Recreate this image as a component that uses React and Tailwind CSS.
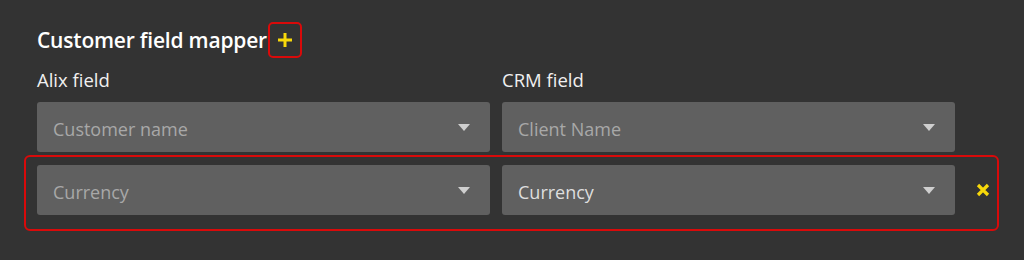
import { useState } from 'react';

const ROWS=[{alix:'Customer name',crm:'Client Name',filled:false},{alix:'Currency',crm:'Currency',filled:true,removable:true}];

function Caret(){
  return <svg width="12" height="7" viewBox="0 0 12 7" className="shrink-0 mt-[1px]"><path d="M0 0h12L6 7z" fill="#cfcfcf"/></svg>;
}

function Select({value,filled}){
  return(
    <div className="h-[50px] bg-[#606060] rounded-[3px] flex items-center justify-between pl-4 pr-[20px] cursor-pointer">
      <span className={`text-[18px] pt-[4px] ${filled?'text-[#dedede]':'text-[#a8a8a8]'}`}>{value}</span>
      <Caret/>
    </div>
  );
}

export default function App(){
  const [rows]=useState(ROWS);
  return(
    <div className="w-[1024px] h-[260px] bg-[#333333] pl-[37px] pt-[22px]" style={{fontFamily:'"Open Sans","Noto Sans",sans-serif'}}>
      <div className="flex items-center h-[36px]">
        <h2 className="text-white text-[21px] leading-[28px] font-semibold tracking-[-0.2px]">Customer field mapper</h2>
        <button className="ml-[1px] w-[34px] h-[36px] border-2 border-[#d90a0a] rounded-[5px] flex items-center justify-center">
          <svg width="16" height="16" viewBox="0 0 16 16"><path d="M8 1v14M1 8h14" stroke="#f7d80a" strokeWidth="3"/></svg>
        </button>
      </div>
      <div className="grid grid-cols-[453px_453px] gap-x-[12px] mt-[9px] text-[18.5px] leading-[26px] text-[#f0f0f0]">
        <span>Alix field</span><span>CRM field</span>
      </div>
      <div className="mt-[9px] grid grid-cols-[453px_453px] gap-x-[12px]">
        <Select value={rows[0].alix}/><Select value={rows[0].crm}/>
      </div>
      <div className="mt-[3px] ml-[-13px] w-[975px] h-[76px] border-2 border-[#d90a0a] rounded-[6px] pl-[11px] pt-[8px] flex items-start">
        <div className="grid grid-cols-[453px_453px] gap-x-[12px]">
          <Select value={rows[1].alix}/><Select value={rows[1].crm} filled/>
        </div>
        <button className="ml-[21px] mt-[18px] w-[14px] h-[14px] flex items-center justify-center">
          <svg width="14" height="14" viewBox="0 0 14 14"><path d="M2 2l10 10M12 2l-10 10" stroke="#f7d80a" strokeWidth="3.2"/></svg>
        </button>
      </div>
    </div>
  );
}
